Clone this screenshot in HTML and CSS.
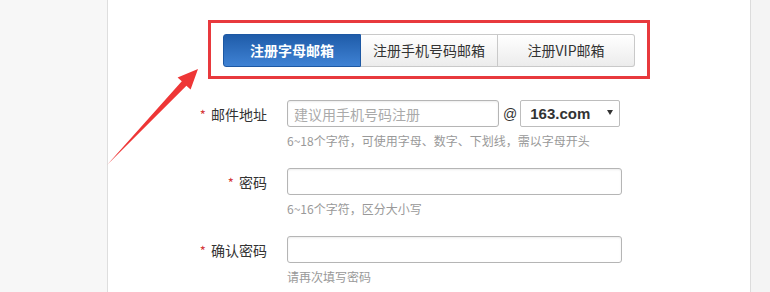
FILE: index.html
```html
<!DOCTYPE html>
<html lang="zh-CN">
<head>
<meta charset="utf-8">
<title>注册</title>
<link rel="stylesheet" href="styles.css">
</head>
<body>
<div class="page">
  <div class="side-left"></div>
  <div class="main">
    <div class="tabs-frame">
      <div class="tabs">
        <div class="tab active">注册字母邮箱</div>
        <div class="tab">注册手机号码邮箱</div>
        <div class="tab">注册VIP邮箱</div>
      </div>
    </div>
    <div class="form">
      <div class="row">
        <div class="label"><span class="star">*</span> 邮件地址</div>
        <div class="field">
          <div class="inline">
            <input class="input short" type="text" placeholder="建议用手机号码注册">
            <span class="at">@</span>
            <div class="select"><span class="sel-text">163.com</span><span class="caret"></span></div>
          </div>
          <div class="hint">6~18个字符，可使用字母、数字、下划线，需以字母开头</div>
        </div>
      </div>
      <div class="row">
        <div class="label"><span class="star">*</span> 密码</div>
        <div class="field">
          <input class="input long" type="password">
          <div class="hint">6~16个字符，区分大小写</div>
        </div>
      </div>
      <div class="row">
        <div class="label"><span class="star">*</span> 确认密码</div>
        <div class="field">
          <input class="input long" type="password">
          <div class="hint">请再次填写密码</div>
        </div>
      </div>
    </div>
  </div>
  <div class="side-right"></div>
  <svg class="arrow" width="770" height="292" viewBox="0 0 770 292">
    <polygon points="107,165 181.8,81.2 177.6,77.4 198,69 190.6,89.6 186.4,85.8" fill="#ee3636"/>
  </svg>
</div>
</body>
</html>
```

FILE: styles.css
```css
html, body {
  margin: 0;
  padding: 0;
}
body {
  font-family: "Noto Sans CJK SC", "Noto Sans", sans-serif;
  color: #333;
  background: #fff;
}
.page {
  position: relative;
  display: flex;
  width: 770px;
  height: 292px;
  overflow: hidden;
}
.side-left {
  width: 107px;
  background: #f7f7f7;
  border-right: 1px solid #dedede;
}
.main {
  width: 642px;
  padding-top: 20px;
  background: #fff;
}
.side-right {
  flex: 1;
  background: #f4f4f4;
  border-left: 1px solid #dcdcdc;
}
.tabs-frame {
  box-sizing: border-box;
  width: 442px;
  margin-left: 100px;
  border: 3px solid #e8393d;
  padding: 11px 12px 9px 12px;
}
.tabs {
  display: flex;
  height: 33px;
}
.tab {
  flex: 1;
  box-sizing: border-box;
  height: 33px;
  line-height: 31px;
  text-align: center;
  font-size: 14px;
  color: #333;
  border: 1px solid #c9c9c9;
  border-left: none;
  background: linear-gradient(#ffffff, #ececec);
}
.tab:last-child {
  border-radius: 0 3px 3px 0;
}
.tab.active {
  color: #fff;
  font-weight: bold;
  border: 1px solid #1d58a3;
  border-radius: 3px 0 0 3px;
  background: linear-gradient(#1f5ca9, #3f82d4);
}
.form {
  margin-top: 21px;
}
.row {
  display: grid;
  grid-template-columns: 159px auto;
  column-gap: 20px;
  margin-bottom: 18px;
}
.label {
  text-align: right;
  font-size: 14px;
  line-height: 28px;
  color: #333;
}
.star {
  color: #d43a3a;
  font-size: 13px;
  margin-right: 2px;
}
.inline {
  display: flex;
  align-items: center;
}
.input {
  box-sizing: border-box;
  height: 27px;
  padding: 0 6px;
  border: 1px solid #b5b5b5;
  border-radius: 3px;
  box-shadow: inset 0 1px 2px rgba(0, 0, 0, 0.08);
  font-family: "Noto Sans CJK SC", "Noto Sans", sans-serif;
  font-size: 14px;
  color: #333;
  outline: none;
  display: block;
  margin: 0;
}
.input::placeholder {
  color: #aaa;
}
.short {
  width: 212px;
}
.long {
  width: 335px;
}
.at {
  margin: 0 3px 0 4px;
  font-family: "Liberation Sans", sans-serif;
  font-size: 14px;
  color: #333;
}
.select {
  box-sizing: border-box;
  display: flex;
  align-items: center;
  justify-content: space-between;
  width: 100px;
  height: 27px;
  padding: 0 6px 0 9px;
  border: 1px solid #bdbdbd;
  border-radius: 2px;
  background: #fff;
}
.sel-text {
  font-family: "Liberation Sans", sans-serif;
  font-weight: bold;
  font-size: 15px;
  color: #333;
}
.caret {
  width: 0;
  height: 0;
  border-left: 3px solid transparent;
  border-right: 3px solid transparent;
  border-top: 5px solid #333;
  margin-bottom: 3px;
}
.hint {
  margin-top: 5px;
  font-size: 12px;
  line-height: 18px;
  color: #999;
}
.arrow {
  position: absolute;
  left: 0;
  top: 0;
  pointer-events: none;
}
```
